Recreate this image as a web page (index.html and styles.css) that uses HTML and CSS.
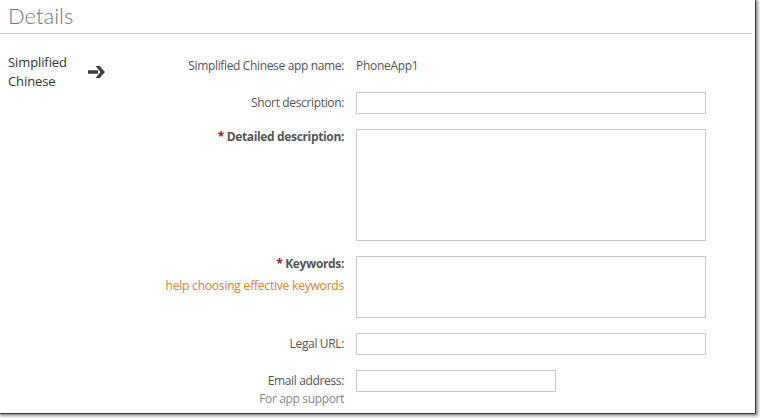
FILE: index.html
```html
<!DOCTYPE html>
<html>
<head>
<meta charset="utf-8">
<link rel="stylesheet" href="styles.css">
</head>
<body>
<div class="window">
  <h1 class="title">Details</h1>
  <div class="content">
    <div class="lang">
      <div class="lang-name">Simplified<br>Chinese</div>
      <svg class="arrow" width="17" height="12" viewBox="0 0 17 12"><path d="M0 4.2 H10 V7.8 H0 Z M7.5 0 H11.5 L17 6 L11.5 12 H7.5 L12.5 6 Z" fill="#3c3c3c"/></svg>
    </div>
    <div class="form">
      <div class="label">Simplified Chinese app name:</div>
      <div class="value">PhoneApp1</div>

      <div class="label">Short description:</div>
      <div class="field"><div class="input"></div></div>

      <div class="label top bold"><span class="req">*</span> Detailed description:</div>
      <div class="field"><div class="input big"></div></div>

      <div class="label top bold"><span class="req">*</span> Keywords:<div class="help">help choosing effective keywords</div></div>
      <div class="field"><div class="input mid"></div></div>

      <div class="label">Legal URL:</div>
      <div class="field"><div class="input"></div></div>

      <div class="label">Email address:<div class="sub">For app support</div></div>
      <div class="field"><div class="input short"></div></div>
    </div>
  </div>
</div>
</body>
</html>
```
FILE: styles.css
```css
html, body {
  margin: 0;
  padding: 0;
  background: #fff;
}
body {
  width: 760px;
  height: 418px;
  overflow: hidden;
  font-family: "Open Sans", "Noto Sans", sans-serif;
}
.window {
  width: 756px;
  height: 414px;
  box-sizing: border-box;
  border-right: 1px solid #3a3a3a;
  border-bottom: 1px solid #3a3a3a;
  box-shadow: 1px 1px 3px 1px rgba(0,0,0,0.45);
  padding-right: 3px;
  background: #fff;
}
.title {
  margin: 0;
  padding: 2px 0 0 8px;
  height: 34px;
  box-sizing: border-box;
  font-family: Lato, "Open Sans", sans-serif;
  font-weight: 300;
  font-size: 22px;
  line-height: 28px;
  color: #777;
  border-bottom: 1px solid #c8c8c8;
}
.content {
  display: flex;
  padding-top: 21px;
}
.lang {
  width: 158px;
  display: flex;
  align-items: flex-start;
  flex-shrink: 0;
  margin-top: -2px;
}
.lang-name {
  margin-left: 8px;
  width: 80px;
  font-size: 13px;
  line-height: 19px;
  color: #333;
  letter-spacing: -0.1px;
}
.arrow {
  margin-top: 13px;
}
.form {
  display: grid;
  grid-template-columns: 186px 350px;
  column-gap: 12px;
  row-gap: 15px;
  align-items: start;
}
.label {
  text-align: right;
  font-size: 12px;
  line-height: 16px;
  padding-top: 3px;
  color: #555;
  letter-spacing: -0.35px;
}
.label.top {
  padding-top: 0;
}
.bold {
  font-weight: bold;
}
.req {
  color: #8a1c2c;
}
.help {
  font-weight: normal;
  color: #e0802e;
  margin-top: 6px;
  white-space: nowrap;
  letter-spacing: -0.2px;
}
.sub {
  color: #888;
  margin-top: 2px;
}
.value {
  font-size: 12px;
  line-height: 22px;
  color: #555;
  letter-spacing: -0.3px;
}
.input {
  height: 22px;
  box-sizing: border-box;
  border: 1px solid #c8c8c8;
  background: #fff;
}
.input.big {
  height: 112px;
}
.input.mid {
  height: 62px;
}
.input.short {
  width: 200px;
}
```
